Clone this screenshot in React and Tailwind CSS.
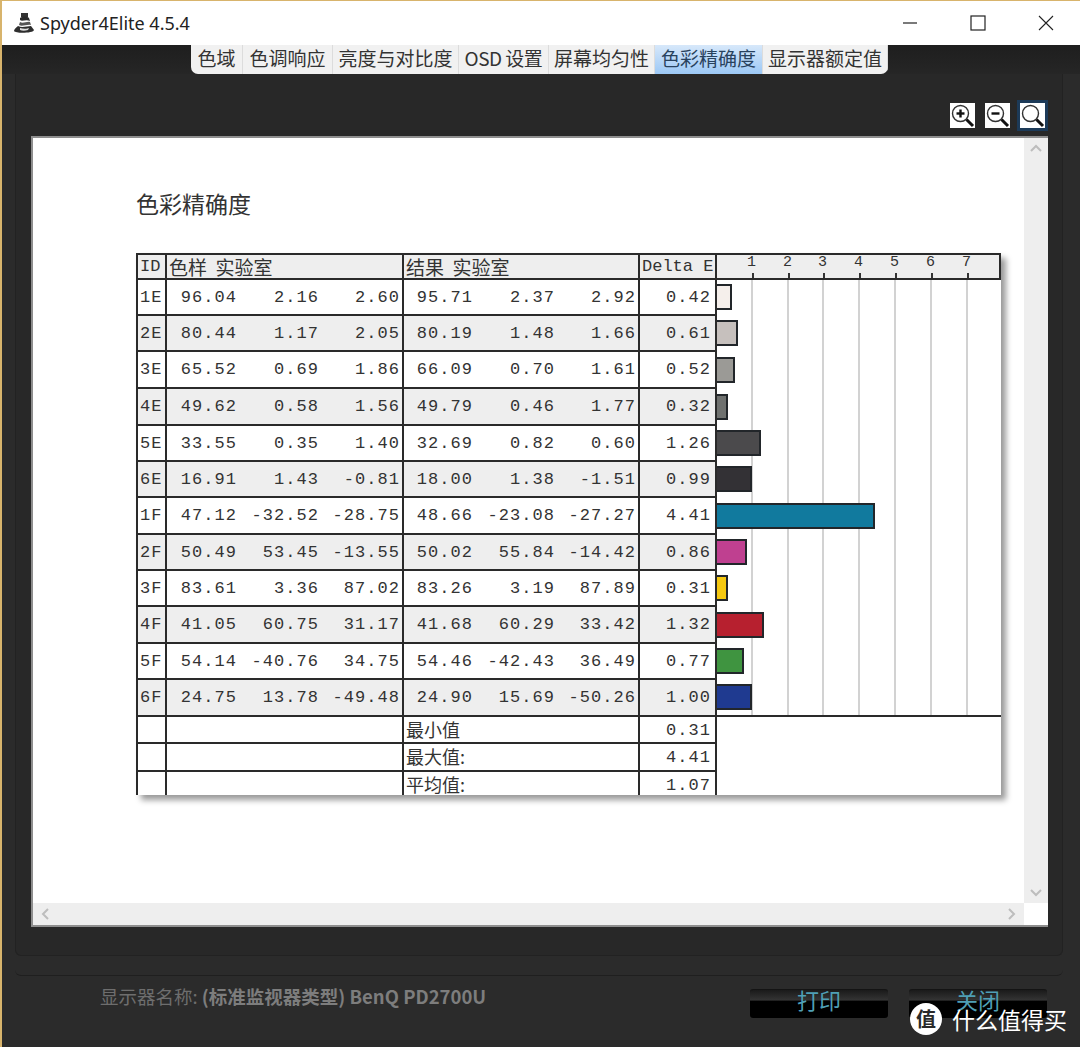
import React from "react";

const cjk = "font-['Noto_Sans_CJK_SC','Noto_Sans',sans-serif]";
const mono = "font-['Liberation_Mono','Noto_Sans_CJK_SC',monospace]";

const rows = [
  { id: "1E", a: ["96.04", "2.16", "2.60"], b: ["95.71", "2.37", "2.92"], d: 0.42, h: 36, w: 15, color: "bg-[#f5efeb]" },
  { id: "2E", a: ["80.44", "1.17", "2.05"], b: ["80.19", "1.48", "1.66"], d: 0.61, h: 36, w: 21, color: "bg-[#c6c0bd]" },
  { id: "3E", a: ["65.52", "0.69", "1.86"], b: ["66.09", "0.70", "1.61"], d: 0.52, h: 37, w: 18, color: "bg-[#9b9a96]" },
  { id: "4E", a: ["49.62", "0.58", "1.56"], b: ["49.79", "0.46", "1.77"], d: 0.32, h: 37, w: 11, color: "bg-[#6f716f]" },
  { id: "5E", a: ["33.55", "0.35", "1.40"], b: ["32.69", "0.82", "0.60"], d: 1.26, h: 36, w: 44, color: "bg-[#4b4a4c]" },
  { id: "6E", a: ["16.91", "1.43", "-0.81"], b: ["18.00", "1.38", "-1.51"], d: 0.99, h: 36, w: 35, color: "bg-[#333135]" },
  { id: "1F", a: ["47.12", "-32.52", "-28.75"], b: ["48.66", "-23.08", "-27.27"], d: 4.41, h: 37, w: 158, color: "bg-[#117a9e]" },
  { id: "2F", a: ["50.49", "53.45", "-13.55"], b: ["50.02", "55.84", "-14.42"], d: 0.86, h: 36, w: 30, color: "bg-[#bf4090]" },
  { id: "3F", a: ["83.61", "3.36", "87.02"], b: ["83.26", "3.19", "87.89"], d: 0.31, h: 36, w: 11, color: "bg-[#f5c810]" },
  { id: "4F", a: ["41.05", "60.75", "31.17"], b: ["41.68", "60.29", "33.42"], d: 1.32, h: 37, w: 47, color: "bg-[#b7202f]" },
  { id: "5F", a: ["54.14", "-40.76", "34.75"], b: ["54.46", "-42.43", "36.49"], d: 0.77, h: 36, w: 27, color: "bg-[#3f9440]" },
  { id: "6F", a: ["24.75", "13.78", "-49.48"], b: ["24.90", "15.69", "-50.26"], d: 1.0, h: 37, w: 35, color: "bg-[#1f3a90]" },
];

const tabs = [
  { label: "色域", w: "w-[52px]" },
  { label: "色调响应", w: "w-[90px]" },
  { label: "亮度与对比度", w: "w-[126px]" },
  { label: "OSD 设置", w: "w-[90px] tracking-[-0.5px]" },
  { label: "屏幕均匀性", w: "w-[106px]" },
  { label: "色彩精确度", w: "w-[108px]", active: true },
  { label: "显示器额定值", w: "w-[125px]" },
];

const ticks = [1, 2, 3, 4, 5, 6, 7];

const Logo = () => (
  <svg width="23" height="24" viewBox="0 0 23 24">
    <path d="M8 2 L15 2 L15 6 L8 6 Z" fill="#333" />
    <path d="M7 7 C10 5 14 5 16 7 L17 10 C13 8 9 11 7 9 Z" fill="#2b2b2b" />
    <path d="M7 11 C10 13 14 10 17 11 L18 14 C14 13 9 16 6 14 Z" fill="#555" />
    <path d="M5 15 C9 17 14 15 18 15 L21 19 C21 22 3 23 1 20 C1 18 3 17 5 15 Z" fill="#2e2e2e" />
    <path d="M7 17 C10 18 14 18 16 17 L15 19 C12 20 9 20 7 19 Z" fill="#ddd" />
  </svg>
);

const Magnifier = ({ mark }) => (
  <svg width="25" height="25" viewBox="0 0 25 25" className="bg-white">
    <circle cx="10.5" cy="10.5" r="8" fill="none" stroke="#333" strokeWidth="1.4" />
    <path d="M16.5 16.5 L23 23" stroke="#111" strokeWidth="3" />
    {mark !== "none" && <path d="M6.5 10.5 H14.5" stroke="#111" strokeWidth="2.4" />}
    {mark === "plus" && <path d="M10.5 6.5 V14.5" stroke="#111" strokeWidth="2.4" />}
  </svg>
);

const Chevron = ({ d }) => (
  <svg width="14" height="14" viewBox="0 0 14 14">
    <path d={d} fill="none" stroke="#bdbdbd" strokeWidth="2" />
  </svg>
);

const ValueCells = ({ values, cols }) => (
  <div className={`grid h-full items-center pt-[1px] text-right ${cols}`}>
    {values.map((v, i) => (
      <span key={i}>{v}</span>
    ))}
  </div>
);

const Row = ({ r, index, last }) => {
  const shade = index % 2 === 1 ? "bg-[#eeeeee]" : "bg-white";
  const hClass = r.h === 36 ? "h-[36px]" : "h-[37px]";
  return (
    <div className={`flex ${hClass} ${mono} text-[17px] tracking-[1.05px] text-[#333]`}>
      <div className={`w-[29px] border-r-2 border-b-2 border-[#2a2a2a] pl-[2px] leading-[36px] ${shade}`}>{r.id}</div>
      <div className={`w-[237px] border-r-2 border-b-2 border-[#2a2a2a] ${shade}`}>
        <ValueCells values={r.a} cols="grid-cols-[70px_82px_81px]" />
      </div>
      <div className={`w-[236px] border-r-2 border-b-2 border-[#2a2a2a] ${shade}`}>
        <ValueCells values={r.b} cols="grid-cols-[69px_82px_81px]" />
      </div>
      <div className={`w-[77px] border-r-2 border-b-2 border-[#2a2a2a] pr-[4px] text-right leading-[36px] ${shade}`}>{r.d.toFixed(2)}</div>
      <div className={`flex flex-1 items-center pb-[2px] ${last ? "border-b-2 border-[#2a2a2a]" : ""}`}>
        <div className={`relative z-10 h-[26px] border-2 border-l-0 border-[#22262a] ${r.color}`} style={{ width: r.w }} />
      </div>
    </div>
  );
};

const SummaryRow = ({ label, value, h, last }) => {
  const line = last ? "border-r-2 border-[#2a2a2a]" : "border-r-2 border-b-2 border-[#2a2a2a]";
  return (
    <div className={`flex ${h} overflow-hidden text-[#333]`}>
      <div className={`w-[29px] ${line}`} />
      <div className={`w-[237px] ${line}`} />
      <div className={`w-[236px] ${line} ${cjk} text-[18px] leading-[24px] pl-[2px]`}>{label}</div>
      <div className={`w-[77px] ${line} ${mono} text-[17px] tracking-[1.05px] pr-[4px] text-right leading-[27px]`}>{value}</div>
      <div className="flex-1 bg-white" />
    </div>
  );
};

const FooterButton = ({ children }) => (
  <button className="h-[29px] w-[138px] rounded-[3px] border-t border-[#141414] bg-[linear-gradient(#1a1a1a_0%,#343434_36%,#000_40%,#000_100%)] text-[22px] leading-[24px] text-[#4f9fb5]">
    <span className="block -translate-y-[5px]">{children}</span>
  </button>
);

export default function App() {
  return (
    <div className={`flex h-[1047px] w-[1080px] flex-col overflow-hidden border-t border-l-2 border-[#d8b46c] bg-[#2b2b2b] ${cjk}`}>
      {/* Title bar */}
      <div className="flex h-[44px] shrink-0 items-center bg-white pl-[11px] pr-[26px]">
        <Logo />
        <span className="ml-[4px] font-['Noto_Sans'] text-[18px] text-[#222]">Spyder4Elite 4.5.4</span>
        <div className="ml-auto flex items-center gap-[52px]">
          <svg width="16" height="16" viewBox="0 0 16 16"><path d="M1 8 H15" stroke="#222" strokeWidth="1.2" /></svg>
          <svg width="16" height="16" viewBox="0 0 16 16"><rect x="1" y="1" width="14" height="14" fill="none" stroke="#222" strokeWidth="1.2" /></svg>
          <svg width="16" height="16" viewBox="0 0 16 16"><path d="M1 1 L15 15 M15 1 L1 15" stroke="#222" strokeWidth="1.1" /></svg>
        </div>
      </div>

      {/* Tabs */}
      <div className="flex h-[29px] shrink-0 bg-gradient-to-b from-[#1e1e1e] to-[#262626] pl-[189px]">
        <div className="flex overflow-hidden rounded-b-[7px] bg-[#f1f1f1]">
          {tabs.map((t) => (
            <div
              key={t.label}
              className={`${t.w} flex items-center justify-center border-r border-[#dcdcdc] pb-[4px] text-[19px] leading-none text-[#333] ${t.active ? "bg-gradient-to-b from-[#d7e8fa] to-[#9cc8f5] text-[#28425e]" : ""}`}
            >
              {t.label}
            </div>
          ))}
        </div>
      </div>

      {/* Inner frame */}
      <div className="ml-[13px] mr-[17px] flex h-[882px] shrink-0 flex-col rounded-b-[6px] border-x border-b border-[#222] bg-[#282828]">
        {/* Zoom controls */}
        <div className="flex h-[62px] shrink-0 items-end justify-end gap-[10px] pb-[8px] pr-[14px]">
          <Magnifier mark="plus" />
          <Magnifier mark="minus" />
          <div className="mb-[-3px] ml-[-3px] border-[3px] border-[#1c3a58]">
            <Magnifier mark="none" />
          </div>
        </div>

        {/* Report panel */}
        <div className="ml-[15px] mr-[14px] flex h-[791px] shrink-0 flex-col border-y-2 border-l-2 border-[#8e8e8e] bg-white">
          <div className="flex min-h-0 flex-1">
            <div className="flex-1 pl-[103px] pt-[47px]">
              <h1 className="text-[23px] font-normal leading-[36px] text-[#333]">色彩精确度</h1>
              <div className="relative mt-[32px] h-[542px] w-[865px] border-l-2 border-t-2 border-[#2a2a2a] shadow-[5px_5px_6px_#9a9a9a]">
                {/* Header */}
                <div className="flex h-[25px] border-b-2 border-[#2a2a2a] bg-[#eeeeee] text-[#333]">
                  <div className={`w-[29px] border-r-2 border-[#2a2a2a] pl-[2px] ${mono} text-[17px] leading-[24px]`}>ID</div>
                  <div className="w-[237px] whitespace-pre border-r-2 border-[#2a2a2a] pl-[2px] text-[19px] leading-[24px]">色样  实验室</div>
                  <div className="w-[236px] whitespace-pre border-r-2 border-[#2a2a2a] pl-[2px] text-[19px] leading-[24px]">结果  实验室</div>
                  <div className={`w-[77px] whitespace-nowrap border-r-2 border-[#2a2a2a] pl-[2px] ${mono} text-[17px] leading-[24px]`}>Delta E</div>
                  <div className={`relative flex-1 border-r-2 border-[#2a2a2a] ${mono} text-[15px] leading-[15px]`}>
                    {ticks.map((n) => (
                      <div key={n} className="absolute inset-y-0 w-0" style={{ left: Math.round(n * 35.8) }}>
                        <span className="absolute left-[-6px] top-0">{n}</span>
                        <span className="absolute bottom-0 left-[-1px] h-[5px] w-[2px] bg-[#333]" />
                      </div>
                    ))}
                  </div>
                </div>

                {/* Rows */}
                <div className="relative">
                  <div className="absolute inset-y-0 left-[579px] right-0">
                    {ticks.map((n) => (
                      <span key={n} className="absolute inset-y-0 w-[2px] bg-[#d2d2d2]" style={{ left: Math.round(n * 35.8) - 2 }} />
                    ))}
                  </div>
                  <div className="relative">
                    {rows.map((r, i) => (
                      <Row key={r.id} r={r} index={i} last={i === rows.length - 1} />
                    ))}
                  </div>
                </div>
                <SummaryRow label="最小值" value="0.31" h="h-[27px]" />
                <SummaryRow label="最大值:" value="4.41" h="h-[28px]" />
                <SummaryRow label="平均值:" value="1.07" h="h-[23px]" last />
              </div>
            </div>
            {/* Vertical scrollbar */}
            <div className="flex w-[24px] shrink-0 flex-col items-center justify-between bg-[#eeeeee] py-[4px]">
              <Chevron d="M2 9 L7 4 L12 9" />
              <Chevron d="M2 5 L7 10 L12 5" />
            </div>
          </div>
          {/* Horizontal scrollbar */}
          <div className="flex h-[22px] shrink-0">
            <div className="flex flex-1 items-center justify-between bg-[#eeeeee] px-[6px]">
              <Chevron d="M9 2 L4 7 L9 12" />
              <Chevron d="M5 2 L10 7 L5 12" />
            </div>
            <div className="w-[24px] bg-white" />
          </div>
        </div>
      </div>

      <div className="ml-[13px] mr-[17px] mt-[6px] h-[14px] shrink-0 rounded-b-[6px] border-b border-[#1f1f1f]" />

      {/* Footer */}
      <div className="relative flex flex-1 items-start pl-[98px] pr-[33px] pt-[13px]">
        <p className="-mt-[6px] text-[18.5px] leading-[26px] text-[#6e6e6e]">
          显示器名称: <span className="font-bold text-[#7d7d7d]">(标准监视器类型) BenQ PD2700U</span>
        </p>
        <div className="ml-auto flex gap-[21px]">
          <FooterButton>打印</FooterButton>
          <FooterButton>关闭</FooterButton>
        </div>
        {/* Watermark */}
        <div className="absolute bottom-[12px] left-[908px] flex items-center gap-[10px] text-white">
          <span className="flex h-[32px] w-[32px] items-center justify-center rounded-full bg-white text-[20px] font-bold leading-none text-[#2a2a2a]">值</span>
          <span className="text-[23px] leading-[32px]">什么值得买</span>
        </div>
      </div>
    </div>
  );
}
